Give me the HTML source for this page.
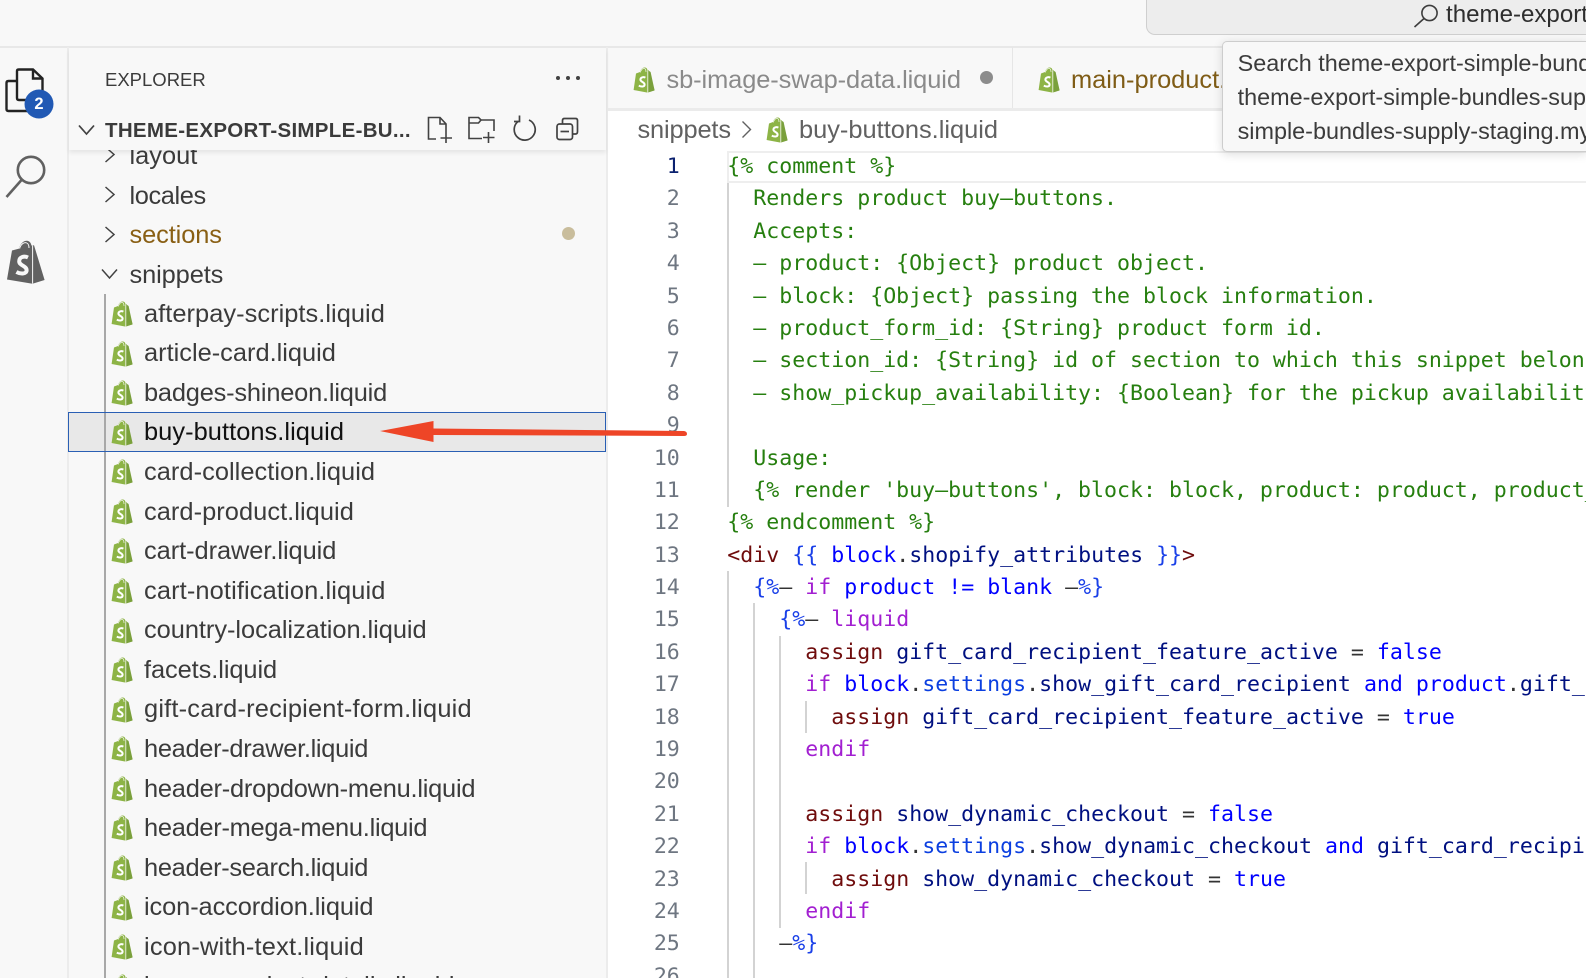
<!DOCTYPE html>
<html>
<head>
<meta charset="utf-8">
<style>
html,body{margin:0;padding:0;width:1586px;height:978px;overflow:hidden;background:#f8f8f8;}
body{position:relative;font-family:"Liberation Sans",sans-serif;color:#3b3b3b;}
.a{position:absolute;}
.t{position:absolute;white-space:pre;font-size:25.4px;line-height:40px;height:40px;}
svg{position:absolute;overflow:visible;}
#tree{position:absolute;left:144px;top:294.8px;width:450px;height:683.2px;overflow:hidden;font-size:25.4px;line-height:39.57px;color:#3b3b3b;white-space:pre;}
#tree div{height:39.57px;}
#code{position:absolute;left:727.3px;width:858.7px;height:826.8px;overflow:hidden;top:151px;margin:0;font-family:"DejaVu Sans Mono",monospace;font-size:21.58px;line-height:32.39px;white-space:pre;color:#267f0f;}
#nums{position:absolute;left:620px;width:59.8px;height:826.8px;overflow:hidden;top:151px;margin:0;text-align:right;font-family:"DejaVu Sans Mono",monospace;font-size:21.58px;line-height:32.39px;color:#6e7681;white-space:pre;}
.d{color:#6f0c0c}.b{color:#1a40e8}.k{color:#0000ff}.n{color:#001080}.p{color:#a21fd1}.g{color:#333}.s{color:#0b3fe0}
.ic{width:22px;height:26px;}
</style>
</head>
<body>
<svg width="0" height="0" style="position:absolute">
<defs>
<symbol id="shop" viewBox="0 0 22 26">
<path d="M3 6.5 L7 5 C8 1.5 10.5 0 12.5 0.6 C13.8 1 14.3 2 14.6 3.4 L15.8 3.2 L21.6 23.4 L14.6 25.6 L0.6 23 Z" fill="#8db446"/>
<path d="M15.2 3.4 L17.6 5 L21.6 23.4 L15.2 25.4 Z" fill="#7aa03c"/>
<path d="M14.8 3.5 L14.8 25.6" stroke="#f8f8f8" stroke-width=".8"/>
<path d="M12.4 10.6 C10.2 9.6 7.4 10.4 7.4 12.6 C7.4 15 11.6 15 11.6 17.6 C11.6 19.8 8.4 20 5.8 18.6" fill="none" stroke="#fff" stroke-width="2"/>
<path d="M7.4 5.4 C8 2.6 10 1 11.4 1.4 C12.6 1.8 13 3.2 13 5" fill="none" stroke="#f8f8f8" stroke-width=".7"/>
</symbol>
</defs>
</svg>

<!-- top bar -->
<div class="a" style="left:0;top:0;width:1586px;height:46px;background:#f8f8f8;border-bottom:2px solid #e8e8e8;"></div>
<div class="a" style="left:1146px;top:0;width:440px;height:34px;background:#ededed;border:1px solid #cfcfcf;border-top:none;border-right:none;border-radius:0 0 0 9px;"></div>
<svg style="left:1412px;top:3px" width="28" height="26" viewBox="0 0 28 26"><circle cx="17.5" cy="10" r="7.6" fill="none" stroke="#3d3d3d" stroke-width="1.6"/><path d="M12 15.5 L2.5 24" stroke="#3d3d3d" stroke-width="1.6" fill="none"/></svg>
<div class="a" style="left:1446px;top:0;width:140px;height:30px;line-height:30px;font-size:24.1px;white-space:pre;overflow:hidden;color:#2e2e2e;">theme-export</div>

<!-- activity bar / sidebar / editor backgrounds -->
<div class="a" style="left:67px;top:47px;width:2px;height:931px;background:#ececec;"></div>
<div class="a" style="left:606px;top:47px;width:2px;height:931px;background:#ececec;"></div>
<div class="a" style="left:608px;top:48px;width:978px;height:60px;background:#f8f8f8;"></div>
<div class="a" style="left:608px;top:108px;width:978px;height:3px;background:#ebebeb;"></div>
<div class="a" style="left:608px;top:111px;width:978px;height:867px;background:#fff;"></div>
<div class="a" style="left:1012px;top:47px;width:1px;height:61px;background:#e6e6e6;"></div>

<!-- activity icons -->
<svg style="left:0;top:60px" width="60" height="60" viewBox="0 0 60 60">
<path d="M17 38 V11 Q17 9.5 19 9.5 H33 L42.5 18.5 V38 Q42.5 40 40.5 40 H19 Q17 40 17 38 Z" fill="none" stroke="#232323" stroke-width="2.4"/>
<path d="M33 9.5 V18.5 H42.5" fill="none" stroke="#232323" stroke-width="2.4"/>
<path d="M17 21 H8.5 Q6.5 21 6.5 23 V49 Q6.5 51 8.5 51 H31 Q33 51 33 49 V40" fill="none" stroke="#232323" stroke-width="2.4"/>
<circle cx="39" cy="44" r="14.5" fill="#2159b4"/>
</svg>
<div class="a" style="left:25px;top:93px;width:28px;text-align:center;color:#fff;font-weight:bold;font-size:16.5px;line-height:22px;">2</div>
<svg style="left:0;top:150px" width="60" height="60" viewBox="0 0 60 60">
<circle cx="31" cy="20" r="13.2" fill="none" stroke="#616161" stroke-width="2.6"/>
<path d="M21.5 30 L6.5 47" stroke="#616161" stroke-width="2.6" fill="none"/>
</svg>
<svg style="left:6px;top:240px" width="39" height="44" viewBox="0 0 39 44">
<path d="M6 10.5 L13 8.6 C14.5 3 18.5 0 22 1 C24 1.6 25 3.2 25.5 5.6 L28 5.2 L38.6 40 L26.5 43.8 L1 39.5 Z" fill="#616161"/>
<path d="M26.6 5.6 V43.6" stroke="#f8f8f8" stroke-width="1"/>
<path d="M22 17.5 C18 15.6 13.2 17 13.2 21.2 C13.2 25.8 20.6 25.6 20.6 30.2 C20.6 34 15 34.4 10.4 32" fill="none" stroke="#f8f8f8" stroke-width="4"/>
<path d="M13.6 8.6 C14.6 4.4 18 2 20.4 2.8 C22.4 3.4 23 6 23 8" fill="none" stroke="#f8f8f8" stroke-width="1"/>
</svg>

<!-- sidebar tree -->
<div class="a" style="left:104px;top:294px;width:1.5px;height:684px;background:#a8a8a8;"></div>
<div class="a" style="left:68px;top:412px;width:536px;height:38px;background:#e8e8e8;border:1px solid #2a5fb4;"></div>
<div class="a" style="left:104px;top:413px;width:1.5px;height:38px;background:#a8a8a8;"></div>
<div class="t" style="left:129.5px;top:135.5px;">layout</div>
<div class="t" style="left:129.5px;top:175.5px;letter-spacing:-.4px;">locales</div>
<div class="t" style="left:129.5px;top:214.5px;color:#895f14;letter-spacing:-.1px;">sections</div>
<div class="t" style="left:129.5px;top:254.5px;letter-spacing:-.1px;">snippets</div>
<svg style="left:103.5px;top:145px" width="12" height="20"><path d="M1.5 2 L10 9.5 L1.5 17" fill="none" stroke="#424242" stroke-width="1.5"/></svg>
<svg style="left:103.5px;top:185px" width="12" height="20"><path d="M1.5 2 L10 9.5 L1.5 17" fill="none" stroke="#424242" stroke-width="1.5"/></svg>
<svg style="left:103.5px;top:225px" width="12" height="20"><path d="M1.5 2 L10 9.5 L1.5 17" fill="none" stroke="#424242" stroke-width="1.5"/></svg>
<svg style="left:100px;top:268px" width="20" height="12"><path d="M2 1.5 L9.5 10 L17 1.5" fill="none" stroke="#424242" stroke-width="1.5"/></svg>
<div class="a" style="left:561.5px;top:226.5px;width:13px;height:13px;border-radius:50%;background:#c9bd9c;"></div>

<div id="tree"><div style="letter-spacing:.044px">afterpay-scripts.liquid</div><div>article-card.liquid</div><div style="letter-spacing:-.19px">badges-shineon.liquid</div><div style="letter-spacing:.056px;color:#111">buy-buttons.liquid</div><div style="letter-spacing:.046px">card-collection.liquid</div><div style="letter-spacing:.053px">card-product.liquid</div><div style="letter-spacing:-.056px">cart-drawer.liquid</div><div style="letter-spacing:.126px">cart-notification.liquid</div><div style="letter-spacing:-.04px">country-localization.liquid</div><div style="letter-spacing:-.078px">facets.liquid</div><div style="letter-spacing:.196px">gift-card-recipient-form.liquid</div><div style="letter-spacing:-.3px">header-drawer.liquid</div><div style="letter-spacing:-.225px">header-dropdown-menu.liquid</div><div style="letter-spacing:-.264px">header-mega-menu.liquid</div><div style="letter-spacing:-.3px">header-search.liquid</div><div style="letter-spacing:-.096px">icon-accordion.liquid</div><div style="letter-spacing:.19px">icon-with-text.liquid</div><div>image-product-details.liquid</div></div>

<svg class="ic" style="left:111px;top:301px" viewBox="0 0 22 26"><use href="#shop"/></svg>
<svg class="ic" style="left:111px;top:340.6px" viewBox="0 0 22 26"><use href="#shop"/></svg>
<svg class="ic" style="left:111px;top:380.1px" viewBox="0 0 22 26"><use href="#shop"/></svg>
<svg class="ic" style="left:111px;top:419.7px" viewBox="0 0 22 26"><use href="#shop"/></svg>
<svg class="ic" style="left:111px;top:459.3px" viewBox="0 0 22 26"><use href="#shop"/></svg>
<svg class="ic" style="left:111px;top:498.9px" viewBox="0 0 22 26"><use href="#shop"/></svg>
<svg class="ic" style="left:111px;top:538.4px" viewBox="0 0 22 26"><use href="#shop"/></svg>
<svg class="ic" style="left:111px;top:578px" viewBox="0 0 22 26"><use href="#shop"/></svg>
<svg class="ic" style="left:111px;top:617.6px" viewBox="0 0 22 26"><use href="#shop"/></svg>
<svg class="ic" style="left:111px;top:657.1px" viewBox="0 0 22 26"><use href="#shop"/></svg>
<svg class="ic" style="left:111px;top:696.7px" viewBox="0 0 22 26"><use href="#shop"/></svg>
<svg class="ic" style="left:111px;top:736.3px" viewBox="0 0 22 26"><use href="#shop"/></svg>
<svg class="ic" style="left:111px;top:775.8px" viewBox="0 0 22 26"><use href="#shop"/></svg>
<svg class="ic" style="left:111px;top:815.4px" viewBox="0 0 22 26"><use href="#shop"/></svg>
<svg class="ic" style="left:111px;top:855px" viewBox="0 0 22 26"><use href="#shop"/></svg>
<svg class="ic" style="left:111px;top:894.6px" viewBox="0 0 22 26"><use href="#shop"/></svg>
<svg class="ic" style="left:111px;top:934.1px" viewBox="0 0 22 26"><use href="#shop"/></svg>
<div class="a" style="left:111px;top:973.7px;width:22px;height:4.3px;overflow:hidden;"><svg class="ic" style="left:0;top:0;overflow:hidden" viewBox="0 0 22 26"><use href="#shop"/></svg></div>

<!-- sidebar header (sticky) -->
<div class="a" style="left:69px;top:48px;width:537px;height:102px;background:#f8f8f8;box-shadow:0 3px 4px rgba(0,0,0,.07);"></div>
<div class="t" style="left:105px;top:59.5px;font-size:18.5px;color:#3b3b3b;">EXPLORER</div>
<div class="a" style="left:556px;top:76px;width:4px;height:4px;border-radius:50%;background:#424242;"></div>
<div class="a" style="left:566px;top:76px;width:4px;height:4px;border-radius:50%;background:#424242;"></div>
<div class="a" style="left:576px;top:76px;width:4px;height:4px;border-radius:50%;background:#424242;"></div>
<svg style="left:77px;top:123px" width="20" height="14"><path d="M2 2.5 L9.5 11 L17 2.5" fill="none" stroke="#424242" stroke-width="1.7"/></svg>
<div class="t" style="left:105px;top:111px;font-size:20.5px;letter-spacing:.3px;font-weight:bold;color:#3b3b3b;">THEME-EXPORT-SIMPLE-BU...</div>
<svg style="left:425px;top:115px" width="30" height="30" viewBox="0 0 30 30" fill="none" stroke="#424242" stroke-width="1.6">
<path d="M11 24 H3.5 V2.5 H15 L21 9 V17"/><path d="M15 2.5 V9 H21"/><path d="M21 17 V28 M15.5 23 H27"/>
</svg>
<svg style="left:467px;top:115px" width="32" height="30" viewBox="0 0 32 30" fill="none" stroke="#424242" stroke-width="1.6">
<path d="M15 23.5 H2 V2.5 H11.5 L14 5 H27 V16"/><path d="M2 8 H11.5 L14 5"/><path d="M21.5 17 V28 M16 22.5 H27.5"/>
</svg>
<svg style="left:511px;top:115px" width="28" height="28" viewBox="0 0 28 28" fill="none" stroke="#424242" stroke-width="1.7">
<path d="M7 6.5 A10.5 10.5 0 1 0 18 5"/><path d="M7 1 V7 H1.5" transform="translate(1.5 -.5)"/>
</svg>
<svg style="left:555px;top:116px" width="26" height="26" viewBox="0 0 26 26" fill="none" stroke="#424242" stroke-width="1.7">
<rect x="2" y="8" width="15.5" height="15.5" rx="2.5"/><path d="M7.5 8 V4.5 Q7.5 2.5 9.5 2.5 H20.5 Q22.5 2.5 22.5 4.5 V15.5 Q22.5 18 20.5 18 H17.5"/><path d="M5.5 15.5 H14"/>
</svg>

<!-- tabs -->
<svg class="ic" style="left:633px;top:67px" viewBox="0 0 22 26"><use href="#shop"/></svg>
<div class="t" style="left:666.5px;top:59.5px;color:#8a8a8a;letter-spacing:-.08px;">sb-image-swap-data.liquid</div>
<div class="a" style="left:979.5px;top:71px;width:13px;height:13px;border-radius:50%;background:#8c8c8c;"></div>
<svg class="ic" style="left:1038px;top:67px" viewBox="0 0 22 26"><use href="#shop"/></svg>
<div class="t" style="left:1071px;top:59.5px;color:#7f5c16;">main-product.liquid</div>

<!-- breadcrumb -->
<div class="t" style="left:637.5px;top:110px;color:#616161;letter-spacing:-.15px;">snippets</div>
<svg style="left:741px;top:120px" width="12" height="20"><path d="M1.5 1.5 L9.5 9.5 L1.5 17.5" fill="none" stroke="#616161" stroke-width="1.4"/></svg>
<svg class="ic" style="left:766px;top:117px" viewBox="0 0 22 26"><use href="#shop"/></svg>
<div class="t" style="left:799px;top:110px;color:#616161;">buy-buttons.liquid</div>

<!-- editor -->
<div class="a" style="left:727px;top:151px;width:859px;height:28px;border:2px solid #eeeeee;border-right:none;"></div>
<div class="a" style="left:727px;top:183px;width:2px;height:323.5px;background:#d3d3d3;"></div>
<div class="a" style="left:727px;top:571px;width:2px;height:407px;background:#d3d3d3;"></div>
<div class="a" style="left:753px;top:603px;width:2px;height:375px;background:#d3d3d3;"></div>
<div class="a" style="left:779px;top:636px;width:2px;height:292px;background:#d3d3d3;"></div>
<div class="a" style="left:805px;top:701px;width:2px;height:32px;background:#d3d3d3;"></div>
<div class="a" style="left:805px;top:862px;width:2px;height:32px;background:#d3d3d3;"></div>

<pre id="nums"><span style="color:#0b216f">1</span>
2
3
4
5
6
7
8
9
10
11
12
13
14
15
16
17
18
19
20
21
22
23
24
25
26</pre>

<pre id="code">{% comment %}
  Renders product buy–buttons.
  Accepts:
  – product: {Object} product object.
  – block: {Object} passing the block information.
  – product_form_id: {String} product form id.
  – section_id: {String} id of section to which this snippet belongs.
  – show_pickup_availability: {Boolean} for the pickup availability. If true, the pickup

  Usage:
  {% render 'buy–buttons', block: block, product: product, product_form_id: product_form_id %}
{% endcomment %}
<span class="d">&lt;div</span> <span class="b">{{</span> <span class="k">block</span><span class="g">.</span><span class="n">shopify_attributes</span> <span class="b">}}</span><span class="d">&gt;</span>
  <span class="b">{%</span><span class="g">–</span> <span class="p">if</span> <span class="k">product</span> <span class="k">!=</span> <span class="k">blank</span> <span class="g">–</span><span class="b">%}</span>
    <span class="b">{%</span><span class="g">–</span> <span class="p">liquid</span>
      <span class="d">assign</span> <span class="n">gift_card_recipient_feature_active</span> <span class="g">=</span> <span class="k">false</span>
      <span class="p">if</span> <span class="k">block</span><span class="g">.</span><span class="s">settings</span><span class="g">.</span><span class="n">show_gift_card_recipient</span> <span class="k">and</span> <span class="k">product</span><span class="g">.</span><span class="n">gift_card?</span>
        <span class="d">assign</span> <span class="n">gift_card_recipient_feature_active</span> <span class="g">=</span> <span class="k">true</span>
      <span class="p">endif</span>

      <span class="d">assign</span> <span class="n">show_dynamic_checkout</span> <span class="g">=</span> <span class="k">false</span>
      <span class="p">if</span> <span class="k">block</span><span class="g">.</span><span class="s">settings</span><span class="g">.</span><span class="n">show_dynamic_checkout</span> <span class="k">and</span> <span class="n">gift_card_recipient_feature_active</span>
        <span class="d">assign</span> <span class="n">show_dynamic_checkout</span> <span class="g">=</span> <span class="k">true</span>
      <span class="p">endif</span>
    <span class="g">–</span><span class="b">%}</span></pre>

<!-- tooltip -->
<div class="a" style="left:1222px;top:41px;width:364px;height:109px;background:#f8f8f8;border:1px solid #cdcdcd;border-right:none;border-radius:5px 0 0 5px;box-shadow:0 2px 10px rgba(0,0,0,.14);overflow:hidden;">
<div class="t" style="left:14.6px;top:.5px;font-size:23.4px;color:#3b3b3b;">Search theme-export-simple-bundles-supply</div>
<div class="t" style="left:14.6px;top:34.5px;font-size:23.4px;color:#3b3b3b;">theme-export-simple-bundles-supply-staging</div>
<div class="t" style="left:14.6px;top:68.5px;font-size:23.4px;color:#3b3b3b;">simple-bundles-supply-staging.myshopify.com</div>
</div>

<!-- arrow -->
<svg style="left:370px;top:410px" width="330" height="40" viewBox="0 0 330 40">
<path d="M10 21 L63.5 11 L63.5 18.5 L314 21 Q317 21.5 317 24 Q317 26 314 26 L63.5 25 L63.5 32 Z" fill="#ee4527"/>
</svg>
</body>
</html>
